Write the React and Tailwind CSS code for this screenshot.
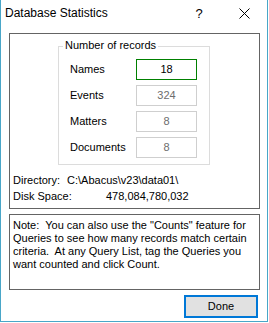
export default function App() {
  const rows = [
    { label: "Names", value: "18", focus: true },
    { label: "Events", value: "324" },
    { label: "Matters", value: "8" },
    { label: "Documents", value: "8" },
  ];
  return (
    <div className="w-[268px] h-[322px] bg-white border-l border-r border-b border-[#49a6c8] flex flex-col font-['Liberation_Sans',Arial,sans-serif] text-[11px] text-black">
      <div className="h-[26px] flex items-center">
        <div className="flex-1 pl-[4px] text-[12px] leading-none">Database Statistics</div>
        <div className="w-[46px] h-[26px] flex items-center justify-center text-[13px] leading-none">?</div>
        <div className="w-[45px] h-[26px] flex items-center justify-center">
          <svg width="11" height="11" viewBox="0 0 11 11">
            <path d="M0.5 0.5 L10.5 10.5 M10.5 0.5 L0.5 10.5" stroke="#000" strokeWidth="1" fill="none" />
          </svg>
        </div>
      </div>
      <div className="mt-[7px] ml-[8px] w-[251px] h-[176px] border border-[#646464] flex flex-col">
        <div className="relative mt-[12px] ml-[48px] w-[152px] h-[119px] border border-[#dcdcdc] pt-[12px] pl-[11px] flex flex-col gap-[5px]">
          <span className="absolute left-[4px] top-[-8px] bg-white px-[2px] leading-[13px]">Number of records</span>
          {rows.map((r) => (
            <div key={r.label} className="flex items-center h-[21px]">
              <span className="w-[66px]">{r.label}</span>
              <div
                className={
                  r.focus
                    ? "w-[61px] h-[21px] border border-[#008000] flex items-center justify-center text-black"
                    : "w-[61px] h-[21px] border border-[#cfcfcf] flex items-center justify-center text-[#6d6d6d]"
                }
              >
                {r.value}
              </div>
            </div>
          ))}
        </div>
        <div className="mt-[7px] pl-[3px] leading-[16px]">
          <div className="flex">
            <span className="w-[54px]">Directory:</span>
            <span>C:\Abacus\v23\data01\</span>
          </div>
          <div className="flex">
            <span className="w-[93px]">Disk Space:</span>
            <span>478,084,780,032</span>
          </div>
        </div>
      </div>
      <div className="mt-[5px] ml-[8px] w-[251px] h-[76px] border border-[#646464] pt-[4px] pl-[3px] leading-[13px] whitespace-pre">
        <div>Note:  You can also use the "Counts" feature for</div>
        <div>Queries to see how many records match certain</div>
        <div>criteria.  At any Query List, tag the Queries you</div>
        <div>want counted and click Count.</div>
      </div>
      <div className="mt-[5px] flex justify-end pr-[9px]">
        <button className="w-[74px] h-[23px] border-2 border-[#0078d7] bg-[#e1e1e1] flex items-center justify-center text-[11px] leading-none">
          Done
        </button>
      </div>
    </div>
  );
}
